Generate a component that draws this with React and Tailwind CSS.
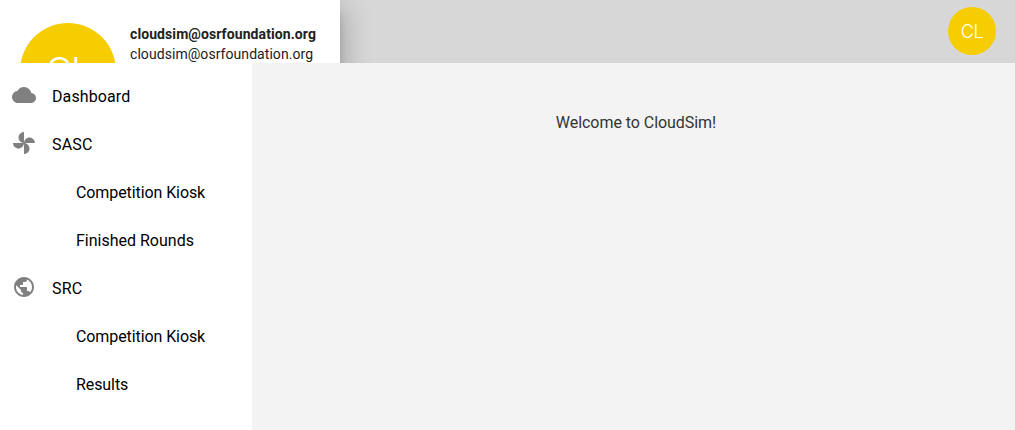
import React from "react";
import { MdCloud, MdPublic } from "react-icons/md";

function Pinwheel({ className }) {
  return (
    <svg viewBox="0 0 24 24" fill="currentColor" className={className}>
      <path d="M12 12c0-3 2.5-5.5 5.5-5.5S23 9 23 12H12zm0 0c0 3-2.5 5.5-5.5 5.5S1 15 1 12h11zm0 0c-3 0-5.5-2.5-5.5-5.5S9 1 12 1v11zm0 0c3 0 5.5 2.5 5.5 5.5S15 23 12 23V12z" />
    </svg>
  );
}

const items = [
  { label: "Dashboard", Icon: MdCloud, tracking: "tracking-[0.1px]" },
  { label: "SASC", Icon: Pinwheel, tracking: "tracking-[0.15px]" },
  { label: "Competition Kiosk", tracking: "tracking-[-0.09px]" },
  { label: "Finished Rounds", tracking: "tracking-normal" },
  { label: "SRC", Icon: MdPublic, tracking: "tracking-[0.25px]" },
  { label: "Competition Kiosk", tracking: "tracking-[-0.09px]" },
  { label: "Results", tracking: "tracking-[-0.08px]" },
];

function NavItem({ label, Icon, tracking }) {
  return (
    <li className={Icon ? "flex h-12 items-center pl-3" : "flex h-12 items-center pl-[76px]"}>
      {Icon && <Icon className="mr-4 -mt-0.5 size-6 shrink-0 text-[#808080]" />}
      <span className={`pt-0.5 text-base leading-6 text-black ${tracking}`}>{label}</span>
    </li>
  );
}

export default function App() {
  return (
    <div className="flex h-[430px] w-full flex-col overflow-hidden bg-[#f3f3f3] font-['Roboto',sans-serif]">
      <header className="flex h-[63px] shrink-0 items-start justify-between overflow-hidden bg-[#d7d7d7]">
        <div className="flex h-36 w-[340px] shrink-0 bg-white pl-5 shadow-[0_16px_24px_2px_rgba(0,0,0,0.14),0_6px_30px_5px_rgba(0,0,0,0.12),0_8px_10px_-5px_rgba(0,0,0,0.4)]">
          <div className="mt-[23px] flex size-24 shrink-0 items-center justify-center rounded-full bg-[#f6cd00] font-['Inter',sans-serif] text-[37px] font-[350] tracking-[-1.5px] text-white">
            CL
          </div>
          <div className="ml-3.5 mt-6 whitespace-nowrap text-sm leading-5 text-[#212121]">
            <div className="font-bold tracking-[0.09px]">cloudsim@osrfoundation.org</div>
            <div className="tracking-[0.06px]">cloudsim@osrfoundation.org</div>
          </div>
        </div>
        <div className="mr-[19px] mt-[7px] flex size-12 items-center justify-center rounded-full bg-[#f6cd00] font-['Inter',sans-serif] text-[18px] font-[350] tracking-[-0.5px] text-white">
          CL
        </div>
      </header>
      <div className="flex min-h-0 flex-1">
        <nav className="w-[252px] shrink-0 bg-white pt-[9px]">
          <ul>
            {items.map((item, i) => (
              <NavItem key={i} {...item} />
            ))}
          </ul>
        </nav>
        <main className="flex-1 pt-12 text-center text-base leading-6 text-[#333333]">
          <p className="pl-[5px] tracking-[-0.05px]">Welcome to CloudSim!</p>
        </main>
      </div>
    </div>
  );
}
